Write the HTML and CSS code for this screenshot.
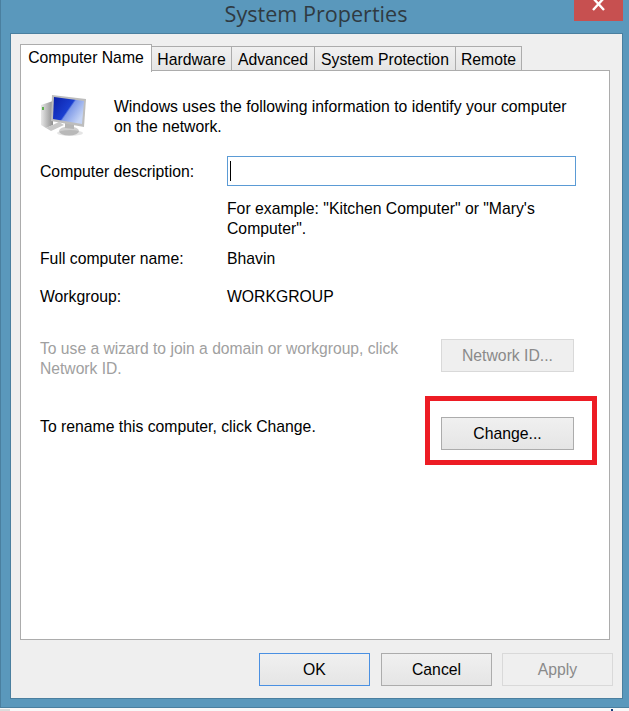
FILE: index.html
```html
<!DOCTYPE html>
<html lang="en">
<head>
    <meta charset="UTF-8">
    <title>System Properties</title>
    <link rel="stylesheet" href="styles.css">
</head>
<body>
<div class="window">
    <div class="titlebar">
        <span class="title">System Properties</span>
        <div class="close">
            <svg width="16" height="14" viewBox="0 0 16 14">
                <path d="M2 -2 L13 10 M13 -2 L2 10" stroke="#fff" stroke-width="2.4" fill="none"/>
            </svg>
        </div>
    </div>
    <div class="client">
        <div class="tabs">
            <div class="tab active">Computer Name</div>
            <div class="tab tab-hardware">Hardware</div>
            <div class="tab tab-advanced">Advanced</div>
            <div class="tab tab-protection">System Protection</div>
            <div class="tab tab-remote">Remote</div>
        </div>
        <div class="panel">
            <div class="intro">
                <svg class="pc-icon" width="48" height="42" viewBox="0 0 48 42">
                    <defs>
                        <linearGradient id="screen" x1="0" y1="0" x2="1" y2="0.6">
                            <stop offset="0" stop-color="#0a1fa8"/>
                            <stop offset="0.55" stop-color="#1a3fd0"/>
                            <stop offset="0.6" stop-color="#7f9ae8"/>
                            <stop offset="1" stop-color="#c5d4f5"/>
                        </linearGradient>
                        <linearGradient id="case" x1="0" y1="0" x2="1" y2="0">
                            <stop offset="0" stop-color="#e8e8e8"/>
                            <stop offset="1" stop-color="#8e8e8e"/>
                        </linearGradient>
                    </defs>
                    <path d="M1 10 L13 6 L13 30 L6 33 L1 30 Z" fill="url(#case)"/>
                    <rect x="2" y="12" width="2" height="3" fill="#5fae4e"/>
                    <path d="M6 33 L19 27 L24 30 L11 36 Z" fill="#c8c8c8"/>
                    <ellipse cx="29" cy="36" rx="10" ry="4.5" fill="#cfcfcf"/>
                    <ellipse cx="30" cy="38" rx="13" ry="3" fill="#000" opacity="0.1"/>
                    <path d="M25 27 L34 29 L34 34 L25 33 Z" fill="#b5b5b5"/>
                    <path d="M12 0 L46 4 L44 32 L11 26 Z" fill="#bdbdbd"/>
                    <path d="M14 2 L44 6 L42 29 L13 24 Z" fill="url(#screen)"/>
                </svg>
                <p class="intro-text">Windows uses the following information to identify your computer on the network.</p>
            </div>
            <div class="form-row desc-row">
                <label class="label desc-label">Computer description:</label>
                <div class="text-input"><span class="caret"></span></div>
            </div>
            <div class="form-row hint-row">
                <span></span>
                <p class="hint">For example: "Kitchen Computer" or "Mary's Computer".</p>
            </div>
            <div class="form-row name-row">
                <span class="label">Full computer name:</span>
                <span>Bhavin</span>
            </div>
            <div class="form-row group-row">
                <span class="label">Workgroup:</span>
                <span>WORKGROUP</span>
            </div>
            <div class="action-row wizard-row">
                <p class="action-text disabled-text">To use a wizard to join a domain or workgroup, click Network ID.</p>
                <button class="btn action-btn" disabled>Network ID...</button>
            </div>
            <div class="action-row rename-row">
                <p class="action-text">To rename this computer, click Change.</p>
                <div class="highlight-wrap">
                    <button class="btn action-btn">Change...</button>
                    <div class="highlight"></div>
                </div>
            </div>
        </div>
        <div class="footer">
            <button class="btn footer-btn default">OK</button>
            <button class="btn footer-btn">Cancel</button>
            <button class="btn footer-btn apply" disabled>Apply</button>
        </div>
    </div>
</div>
<div class="strip">
    <span class="strip-cell"></span>
    <span class="strip-mark"></span>
</div>
</body>
</html>
```

FILE: styles.css
```css
/* page */
body {
    margin: 0;
    background-color: #f8f8f8;
    font-family: "Liberation Sans", Arial, sans-serif;
    font-size: 15.75px;
    line-height: 20px;
    color: #000;
}
p {
    margin: 0;
}

/* window frame */
.window {
    position: relative;
    height: 708px;
    box-sizing: border-box;
    background-color: #5a98bc;
    border-left: 1px solid #4a7f9f;
    border-bottom: 1px solid #4a7f9f;
    padding-left: 9px;
}
.titlebar {
    height: 33px;
    display: flex;
    justify-content: center;
    margin-left: -7px;
}
.title {
    font-family: "Open Sans", "Noto Sans", sans-serif;
    font-size: 21.6px;
    line-height: 27px;
    color: #2f3a42;
}
.close {
    position: absolute;
    top: 0;
    left: 573px;
    width: 49px;
    height: 21px;
    background-color: #c75050;
    display: flex;
    justify-content: center;
}
.client {
    width: 611px;
    height: 664px;
    background-color: #efefef;
    border: 1px solid #4a7f9f;
}

/* tabs */
.tabs {
    display: flex;
    align-items: flex-end;
    height: 27px;
    margin: 10px 0 -1px 9px;
    position: relative;
}
.tab {
    box-sizing: border-box;
    flex: none;
    height: 25px;
    line-height: 25px;
    text-align: center;
    margin-left: -1px;
    background: linear-gradient(#f0f0f0, #e5e5e5);
    border: 1px solid #acacac;
    white-space: nowrap;
}
.tab.active {
    width: 132px;
    height: 28px;
    line-height: 26px;
    margin: 0 0 -1px 0;
    background: #fff;
    border-bottom: none;
    position: relative;
    z-index: 1;
}
.tab-hardware {
    width: 81px;
}
.tab-advanced {
    width: 84px;
}
.tab-protection {
    width: 142px;
}
.tab-remote {
    width: 67px;
}

/* panel */
.panel {
    box-sizing: border-box;
    width: 590px;
    height: 570px;
    margin-left: 9px;
    padding: 26px 35px 0 19px;
    background-color: #fff;
    border: 1px solid #acacac;
}
.intro {
    display: flex;
    gap: 26px;
}
.pc-icon {
    flex: none;
    margin-top: -2px;
}
.intro-text {
    width: 470px;
}
.form-row {
    display: grid;
    grid-template-columns: 187px 349px;
    align-items: center;
}
.desc-row {
    margin-top: 19px;
}
.desc-label {
    padding-top: 2px;
}
.text-input {
    box-sizing: border-box;
    height: 30px;
    background-color: #fff;
    border: 1px solid #5b9bd5;
    padding: 4px 2px;
}
.caret {
    display: block;
    width: 1px;
    height: 20px;
    background-color: #000;
}
.hint-row {
    margin-top: 13px;
}
.name-row {
    margin-top: 10px;
}
.group-row {
    margin-top: 18px;
}
.action-row {
    display: flex;
    justify-content: space-between;
    align-items: flex-start;
}
.action-text {
    width: 380px;
}
.disabled-text {
    color: #a0a0a0;
    font-size: 15.65px;
}
.wizard-row {
    margin-top: 32px;
    height: 40px;
}
.rename-row {
    margin-top: 38px;
}
.btn {
    box-sizing: border-box;
    font-family: inherit;
    font-size: 15.75px;
    color: #000;
    background: linear-gradient(#f0f0f0, #e5e5e5);
    border: 1px solid #acacac;
    padding: 0;
}
.btn:disabled {
    background: #efefef;
    border-color: #d9d9d9;
    color: #8a8a8a;
}
.action-btn {
    display: block;
    width: 133px;
    height: 33px;
}
.highlight-wrap {
    position: relative;
}
.highlight {
    position: absolute;
    top: -21px;
    left: -16px;
    right: -23px;
    bottom: -15px;
    border: 5px solid #ed1c24;
}

/* footer buttons */
.footer {
    display: flex;
    justify-content: flex-end;
    gap: 11px;
    margin-top: 13px;
    margin-right: 9px;
}
.footer-btn {
    width: 111px;
    height: 33px;
}
.footer-btn.default {
    border-color: #4a90e2;
}
.footer-btn.apply {
    margin-left: -1px;
}

/* bit of the desktop showing under the window */
.strip {
    display: flex;
    justify-content: space-between;
    align-items: flex-end;
    height: 3px;
    padding-right: 16px;
}
.strip-cell {
    width: 10px;
    height: 2px;
    background-color: #dcdcdc;
}
.strip-mark {
    width: 2px;
    height: 2px;
    background-color: #1a3a7a;
}
```
